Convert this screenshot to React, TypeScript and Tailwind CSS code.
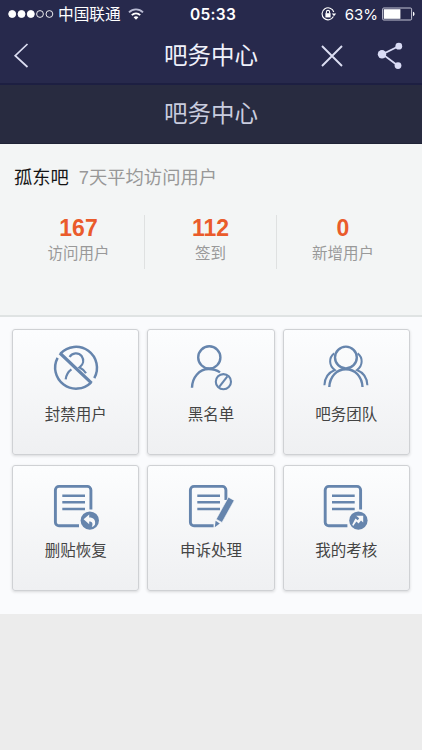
import type { ReactNode } from "react";

interface Stat {
  value: number;
  label: string;
}

interface Tool {
  label: string;
  icon: ReactNode;
}

const stats: Stat[] = [
  { value: 167, label: "访问用户" },
  { value: 112, label: "签到" },
  { value: 0, label: "新增用户" },
];

function BlockUserIcon() {
  return (
    <>
      <path d="M8.5 9.65A21 21 0 0 1 42.3 34.1" strokeWidth="2.5" />
      <path d="M5.6 13.8A21 21 0 0 0 38.95 38.55" strokeWidth="2.5" />
      <path d="M7.8 9L39.6 39.2" strokeWidth="3.2" />
      <path d="M17.6 13C20 8.6 26.5 8.2 29.6 12C32.4 16 31.4 20.4 27.6 23.4C30.6 24.8 32.6 27 34 29.3" strokeWidth="2.2" />
      <path d="M19.4 25.4C16.4 27.6 14.2 31 13.7 35.3" strokeWidth="2.2" />
    </>
  );
}

function BlacklistIcon() {
  return (
    <>
      <circle cx="22.3" cy="13.4" r="11.1" />
      <path d="M5 43.8C5.2 33.4 12.4 25 21.6 25C26 25 30 26.2 33 28.4" />
      <circle cx="36.4" cy="37.7" r="7.6" strokeWidth="2.1" />
      <path d="M40.4 32.4L32.2 42.8" strokeWidth="2.1" />
    </>
  );
}

function TeamIcon() {
  return (
    <>
      <circle cx="23.9" cy="13.5" r="10.9" />
      <path d="M7.3 43C7.8 32.6 14.6 25.2 23.9 25.2C33.2 25.2 40 32.6 40.5 43" />
      <path d="M12.2 9.4C6.6 13.8 6.8 21.4 12.8 26C6.4 28.6 2.6 34.4 2.4 41.2" strokeWidth="2" />
      <path d="M35.6 9.4C41.2 13.8 41 21.4 35 26C41.4 28.6 45.2 34.4 45.4 41.2" strokeWidth="2" />
    </>
  );
}

function RestoreIcon() {
  return (
    <>
      <path d="M27 45.8H7A3.6 3.6 0 0 1 3.4 42.2V10A3.6 3.6 0 0 1 7 6.4H35.3A3.6 3.6 0 0 1 38.9 10V29.6" strokeWidth="2.9" />
      <path d="M10.3 15.7H33M10.3 22.3H33M10.3 29H33" />
      <circle cx="37.8" cy="40.6" r="9.2" fill="#6685ad" stroke="none" />
      <path d="M31.6 39.3L37.2 34.6V37.6C41.6 37.6 43.8 40.2 43 44.4C42 46 41 46.6 39.8 46.8C41.2 43.6 40.4 41.4 37.2 41.4V44.2Z" fill="#f7f8fa" stroke="none" />
    </>
  );
}

function AppealIcon() {
  return (
    <>
      <path d="M26.6 45.8H7A3.6 3.6 0 0 1 3.4 42.2V10A3.6 3.6 0 0 1 7 6.4H35.3A3.6 3.6 0 0 1 38.9 10V20" strokeWidth="2.9" />
      <path d="M10.3 15.7H33M10.3 22.3H33M10.3 29H33" />
      <path d="M41.4 17.2L47.2 20.4L35 42.4L29.2 39.2Z" fill="#6685ad" stroke="#f9fafc" strokeWidth="0.6" />
      <path d="M28.6 40.8L32.8 43.4L27.8 47.2Z" fill="#6685ad" stroke="none" />
    </>
  );
}

function AssessIcon() {
  return (
    <>
      <path d="M25.4 45.8H6.8A3.6 3.6 0 0 1 3.2 42.2V10A3.6 3.6 0 0 1 6.8 6.4H35A3.6 3.6 0 0 1 38.6 10V29.6" strokeWidth="2.9" />
      <path d="M10 15.7H32.7M10 22.3H32.7M10 29H32.7" />
      <circle cx="36.4" cy="40.6" r="9.2" fill="#6685ad" stroke="none" />
      <path d="M34.2 35.8H41.2V42.4L39 40.4L36.6 43.4L34.4 41.6L31.2 46L30.2 44.8L33.4 38.4L35.8 40.2L37.2 38.2Z" fill="#f7f8fa" stroke="none" />
    </>
  );
}

const tools: Tool[] = [
  { label: "封禁用户", icon: <BlockUserIcon /> },
  { label: "黑名单", icon: <BlacklistIcon /> },
  { label: "吧务团队", icon: <TeamIcon /> },
  { label: "删贴恢复", icon: <RestoreIcon /> },
  { label: "申诉处理", icon: <AppealIcon /> },
  { label: "我的考核", icon: <AssessIcon /> },
];

function StatusBar() {
  return (
    <div className="grid h-7 grid-cols-[1fr_auto_1fr] items-center pr-[7px] pl-2 text-white">
      <div className="flex items-center">
        <svg width="46" height="10" viewBox="0 0 46 10" fill="none" stroke="#fff" strokeWidth="0.9">
          <circle cx="4.2" cy="5" r="3.5" fill="#fff" />
          <circle cx="13.5" cy="5" r="3.5" fill="#fff" />
          <circle cx="22.8" cy="5" r="3.5" fill="#fff" />
          <circle cx="32" cy="5" r="3.4" />
          <circle cx="41.4" cy="5" r="3.4" />
        </svg>
        <span className="ml-1 pt-0.5 text-[15.7px] leading-none whitespace-nowrap">中国联通</span>
        <svg className="ml-[7px]" width="16" height="12" viewBox="0 0 16 12" fill="none" stroke="#fff" strokeWidth="1.9">
          <path d="M1 4.4C5 0.4 11 0.4 15 4.4" stroke="#b9bbd3" />
          <path d="M3.8 7.2C6.2 4.8 9.8 4.8 12.2 7.2" />
          <path d="M5.6 9.2C7 7.9 9 7.9 10.4 9.2L8 11.7Z" fill="#fff" stroke="none" />
        </svg>
      </div>
      <div className="pt-px pl-[3px] text-center font-['Inter'] text-[15.5px] leading-none font-semibold tracking-[0.3px]">05:33</div>
      <div className="flex items-center justify-end">
        <svg width="16" height="14" viewBox="0 0 16 14" fill="none" stroke="#fff" strokeWidth="1.1">
          <path d="M12.4 9.6A6 6 0 1 1 12.8 5" />
          <path d="M10.8 6.4H15.2L13 9.2Z" fill="#fff" stroke="none" />
          <rect x="4.4" y="6.2" width="5.2" height="4.2" fill="#fff" stroke="none" />
          <path d="M5.4 6.4V5A1.6 1.6 0 0 1 8.6 5V6.4" />
        </svg>
        <span className="ml-2 font-['Inter'] text-[15px] leading-none">63%</span>
        <svg className="ml-1" width="33" height="14" viewBox="0 0 33 14">
          <rect x="0.6" y="1" width="29" height="12" rx="1.2" fill="none" stroke="#d5d6e4" strokeWidth="0.9" />
          <rect x="1.8" y="2.2" width="16.6" height="9.6" fill="#fff" />
          <path d="M31 4.8C33 5.2 33 8.8 31 9.2Z" fill="#fff" />
        </svg>
      </div>
    </div>
  );
}

function NavBar() {
  return (
    <div className="grid h-[55px] grid-cols-[1fr_auto_1fr] items-center">
      <svg className="ml-3" width="18" height="28" viewBox="0 0 18 28" fill="none" stroke="#dcdef2" strokeWidth="1.7">
        <path d="M15.5 2L3.2 13.7L15.5 25" />
      </svg>
      <h1 className="pt-[3px] text-[23.5px] leading-none font-normal text-[#f0f1fb]">吧务中心</h1>
      <div className="flex items-center justify-end gap-[33px] pr-[17px]">
        <svg width="24" height="24" viewBox="0 0 24 24" fill="none" stroke="#dcdef2" strokeWidth="1.9">
          <path d="M2 2L22 22M22 2L2 22" />
        </svg>
        <svg width="28" height="28" viewBox="0 0 28 28" fill="#d9dbf5" stroke="none">
          <path d="M21.5 4.2L5.6 12.2L21 23.8" fill="none" stroke="#d9dbf5" strokeWidth="1.8" />
          <circle cx="21.8" cy="4.2" r="3.4" />
          <circle cx="5" cy="12.2" r="4.2" />
          <circle cx="21" cy="23.6" r="3.4" />
        </svg>
      </div>
    </div>
  );
}

function StatsPanel() {
  return (
    <section className="h-[173px] border-b-2 border-[#dfe3e3] bg-[#f3f5f5] px-[13px] pt-[23px]">
      <div className="flex gap-2.5 pl-px text-[18.3px] leading-[22px]">
        <span className="text-[#151515]">孤东吧</span>
        <span className="text-[#989898]">7天平均访问用户</span>
      </div>
      <div className="mt-[26px] grid grid-cols-3 divide-x divide-[#dfe1e1]">
        {stats.map((s) => (
          <div className="flex h-[54px] flex-col items-center" key={s.label}>
            <div className="text-[23px] leading-[27px] font-bold text-[#ea5b2b]">{s.value}</div>
            <div className="mt-px text-[15.5px] leading-[21px] text-[#999]">{s.label}</div>
          </div>
        ))}
      </div>
    </section>
  );
}

export default function App() {
  return (
    <div className="flex h-[750px] w-[422px] flex-col overflow-hidden bg-[#ececec] font-['Liberation_Sans','Noto_Sans_CJK_SC',sans-serif]">
      <header className="border-b-2 border-[#1d1f42] bg-[#27294c]">
        <StatusBar />
        <NavBar />
      </header>
      <div className="flex h-[59px] items-center justify-center border-b border-[#1f2336] bg-[#282b40] pt-px text-[23.5px] leading-none text-[#c9ccde]">
        吧务中心
      </div>
      <StatsPanel />
      <main className="grid h-[297px] grid-cols-3 content-start gap-x-2 gap-y-2.5 bg-[#fafbfd] px-3 pt-3">
        {tools.map((t) => (
          <div
            className="flex h-[126px] flex-col items-center rounded-[3px] border border-[#cfd1d4] bg-linear-to-b from-[#fcfdfe] to-[#eff0f2] pt-3.5 shadow-[0_1px_3px_rgba(0,0,0,0.14)]"
            key={t.label}
          >
            <svg width="48" height="52" viewBox="0 0 48 52" fill="none" stroke="#6685ad" strokeWidth="2.4">
              {t.icon}
            </svg>
            <div className="mt-2 text-[15.5px] leading-[22px] text-[#444]">{t.label}</div>
          </div>
        ))}
      </main>
    </div>
  );
}
